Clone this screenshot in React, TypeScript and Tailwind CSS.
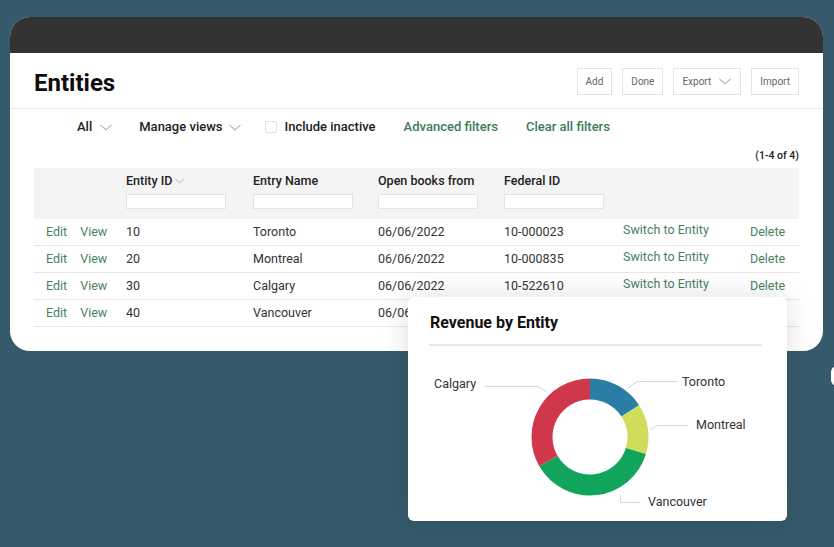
import React from 'react';

const rows = [
  { id: '10', name: 'Toronto', date: '06/06/2022', fed: '10-000023' },
  { id: '20', name: 'Montreal', date: '06/06/2022', fed: '10-000835' },
  { id: '30', name: 'Calgary', date: '06/06/2022', fed: '10-522610' },
  { id: '40', name: 'Vancouver', date: '06/06/2022', fed: '' },
];

// donut geometry, in chart-local coordinates
const CX = 182;
const CY = 91;
const R = 48;

function arc(a0: number, a1: number) {
  const p = (a: number) => {
    const r = (a * Math.PI) / 180;
    return `${(CX + R * Math.sin(r)).toFixed(2)} ${(CY - R * Math.cos(r)).toFixed(2)}`;
  };
  const large = a1 - a0 > 180 ? 1 : 0;
  return `M ${p(a0)} A ${R} ${R} 0 ${large} 1 ${p(a1)}`;
}

const slices = [
  { from: 0, to: 57, color: '#2a7ea6' },
  { from: 57, to: 107, color: '#cfdc5c' },
  { from: 107, to: 240, color: '#10a55b' },
  { from: 240, to: 360, color: '#d1374b' },
];

function Chevron({ className = '' }: { className?: string }) {
  return (
    <svg width="12" height="7" viewBox="0 0 12 7" className={className}>
      <polyline points="0.5,0.8 6,6 11.5,0.8" fill="none" stroke="#b5b5b5" strokeWidth="1.1" />
    </svg>
  );
}

function Btn({ children }: { children: React.ReactNode }) {
  return (
    <div className="flex h-[27px] items-center border border-[#e4e4e4] px-[8px] text-[10px] text-[#666]">
      {children}
    </div>
  );
}

function RevenueCard() {
  return (
    <div className="absolute left-[408px] top-[297px] h-[224px] w-[379px] rounded-[6px] bg-white shadow-[0_0_28px_rgba(0,0,0,0.13)]">
      <div className="pl-[22px] pt-[16px] text-[16px] font-bold leading-[20px] text-[#111]">Revenue by Entity</div>
      <div className="ml-[21px] mr-[25px] mt-[11px] h-[2px] bg-[#e8e8e8]" />
      <svg width="379" height="175" viewBox="0 0 379 175" className="block">
        {slices.map((s) => (
          <path key={s.color} d={arc(s.from, s.to)} fill="none" stroke={s.color} strokeWidth="21" />
        ))}
        <g fill="none" stroke="#d6d6d6" strokeWidth="1">
          <polyline points="77,40.5 130,40.5 139,46" />
          <polyline points="269,35.5 229,35.5 220,42" />
          <polyline points="280,79.5 249,79.5 242,84" />
          <polyline points="232,156.5 212.5,156.5 212.5,149" />
        </g>
        <g fontFamily="Roboto, 'Liberation Sans', sans-serif" fontSize="12.5" fill="#333">
          <text x="26" y="42">Calgary</text>
          <text x="274" y="39.5">Toronto</text>
          <text x="288" y="83">Montreal</text>
          <text x="240" y="159.5">Vancouver</text>
        </g>
      </svg>
    </div>
  );
}

export default function App() {
  const cols = 'grid grid-cols-[92px_127px_125px_126px_119px_127px_49px]';
  return (
    <div className="relative h-[547px] w-[834px] overflow-hidden bg-[#365a6b] font-['Roboto','Liberation_Sans',sans-serif]">
      <div className="ml-[10px] w-[813px] pt-[17px]">
        <div className="overflow-hidden rounded-[20px] bg-white">
          <div className="h-[36px] bg-[#333333]" />

          {/* page header */}
          <div className="flex h-[56px] items-center justify-between border-b border-[#e8e8e8] px-6">
            <h1 className="pt-[4px] text-[24px] font-bold text-[#0d0d0d]">Entities</h1>
            <div className="flex items-center gap-[10px] pt-[2px]">
              <Btn>Add</Btn>
              <Btn>Done</Btn>
              <Btn>
                <span>Export</span>
                <Chevron className="ml-[8px] mr-[1px]" />
              </Btn>
              <Btn>Import</Btn>
            </div>
          </div>

          {/* filters */}
          <div className="flex h-[34px] items-center pl-[67px] pt-[2px] text-[13px] font-medium text-[#222]">
            <span>All</span>
            <Chevron className="ml-[8px]" />
            <span className="ml-[27px]">Manage views</span>
            <Chevron className="ml-[6px]" />
            <span className="ml-[24px] h-[12px] w-[12px] rounded-[2px] border border-[#e0e0e0]" />
            <span className="ml-[8px]">Include inactive</span>
            <span className="ml-[28px] text-[#3b7c58]">Advanced filters</span>
            <span className="ml-[28px] text-[#3b7c58]">Clear all filters</span>
          </div>

          <div className="flex h-[25px] items-center justify-end pr-6 text-[10.5px] font-medium text-[#222]">(1-4 of 4)</div>

          {/* table */}
          <div className="px-6 pb-[24px]">
            <div className={`${cols} h-[51px] bg-[#f4f4f4] pt-[6px] text-[12.5px] font-medium text-[#222]`}>
              <div />
              {['Entity ID', 'Entry Name', 'Open books from', 'Federal ID'].map((h, i) => (
                <div key={h}>
                  <div className="flex items-center leading-[14px]">
                    {h}
                    {i === 0 && (
                      <svg width="9" height="6" viewBox="0 0 9 6" className="ml-[3px]">
                        <polyline points="0.5,1 4.5,5 8.5,1" fill="none" stroke="#b0b0b0" strokeWidth="1" />
                      </svg>
                    )}
                  </div>
                  <div className="mt-[6px] h-[15px] w-[100px] border border-[#e4e4e4] bg-white" />
                </div>
              ))}
              <div />
              <div />
            </div>
            {rows.map((r) => (
              <div key={r.id} className={`${cols} h-[27px] items-center border-b border-[#e6e6e6] text-[12.5px] text-[#333]`}>
                <div className="flex pl-3 text-[#4a7f63]">
                  <span>Edit</span>
                  <span className="ml-[13px]">View</span>
                </div>
                <div>{r.id}</div>
                <div>{r.name}</div>
                <div>{r.date}</div>
                <div>{r.fed}</div>
                <div className="-translate-y-[2px] text-[#4a7f63]">Switch to Entity</div>
                <div className="text-[#4a7f63]">Delete</div>
              </div>
            ))}
          </div>
        </div>
      </div>

      <RevenueCard />

      <div className="absolute left-[831px] top-[366px] h-[20px] w-[12px] rounded-full bg-white" />
    </div>
  );
}
